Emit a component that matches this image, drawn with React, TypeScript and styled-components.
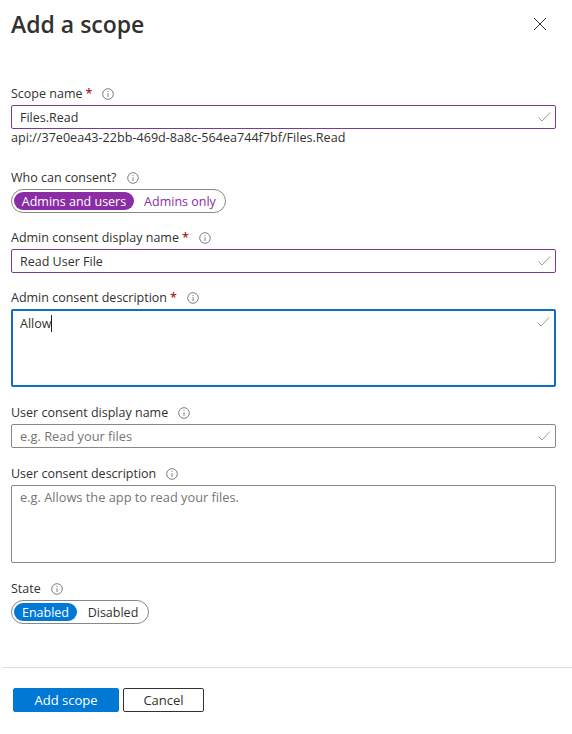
import React from "react";
import styled, { createGlobalStyle } from "styled-components";

const Global = createGlobalStyle`
  html, body { margin: 0; padding: 0; background: #fff; }
  body { font-family: "Open Sans", "Noto Sans", "Liberation Sans", sans-serif; color: #323130; }
  * { box-sizing: border-box; }
`;

const Page = styled.div`
  width: 572px;
  height: 734px;
  overflow: hidden;
  background: #fff;
  display: flex;
  flex-direction: column;
`;

const Header = styled.header`
  height: 48px;
  padding: 0 25px 0 11px;
  display: flex;
  align-items: center;
  justify-content: space-between;
`;

const Title = styled.h1`
  margin: 0;
  font-size: 23px;
  line-height: 30px;
  font-weight: 600;
  color: #323130;
`;

const CloseButton = styled.button`
  width: 14px;
  height: 14px;
  margin-bottom: 1px;
  padding: 0;
  border: 0;
  background: none;
  color: #323130;
  display: block;
`;

const Form = styled.form`
  padding: 37px 16px 0 11px;
  display: flex;
  flex-direction: column;
`;

const Field = styled.div<{ $gap?: number }>`
  margin-top: ${(p) => p.$gap ?? 0}px;
  display: flex;
  flex-direction: column;
`;

const Label = styled.div`
  height: 16px;
  margin-bottom: 4px;
  padding-top: 2px;
  display: flex;
  align-items: center;
  font-size: 12.5px;
  line-height: 16px;
  color: #323130;
`;

const Star = styled.span`
  color: #a4262c;
  margin-left: 3px;
  font-weight: 600;
`;

const InfoIcon = styled.svg`
  width: 12px;
  height: 12px;
  margin-left: 10px;
  color: #605e5c;
  flex: none;
`;

const InputBox = styled.div<{ $tone: "purple" | "grey" | "blue"; $height: number }>`
  position: relative;
  height: ${(p) => p.$height}px;
  border: ${(p) => (p.$tone === "blue" ? "2px solid #106ebe" : p.$tone === "purple" ? "1px solid #7b3a96" : "1px solid #8a8886")};
  border-radius: 2px;
  padding: ${(p) => (p.$height > 30 ? (p.$tone === "blue" ? "4px 7px" : "2px 8px") : "2px 8px 0")};
  display: flex;
  align-items: ${(p) => (p.$height > 30 ? "flex-start" : "center")};
  font-size: 12.5px;
  line-height: 18px;
  color: #323130;
`;

const Placeholder = styled.span`
  margin-bottom: 2px;
  color: #757575;
  font-size: 12.8px;
`;

const Caret = styled.span`
  display: inline-block;
  width: 1px;
  height: 17px;
  background: #201f1e;
  vertical-align: top;
`;

const Check = styled.svg`
  position: absolute;
  right: 4px;
  top: 4px;
  width: 14px;
  height: 14px;
  color: #7fb56f;
`;

const Hint = styled.div`
  margin-top: 1px;
  font-size: 12.6px;
  line-height: 16px;
  color: #323130;
`;

const Toggle = styled.div`
  align-self: flex-start;
  height: 24px;
  padding: 2px;
  border: 1px solid #8a8886;
  border-radius: 12px;
  display: flex;
  align-items: center;
  font-size: 12.5px;
`;

const Pill = styled.span<{ $bg: string; $width: number }>`
  width: ${(p) => p.$width}px;
  height: 18px;
  border-radius: 9px;
  background: ${(p) => p.$bg};
  color: #fff;
  display: flex;
  align-items: center;
  justify-content: center;
`;

const Option = styled.span<{ $color: string; $width: number }>`
  width: ${(p) => p.$width}px;
  padding-left: 3px;
  color: ${(p) => p.$color};
  text-align: center;
`;

const Divider = styled.hr`
  margin: 43px 0 0 2px;
  border: 0;
  border-top: 1px solid #e1e0df;
`;

const Footer = styled.footer`
  padding: 20px 13px;
  display: flex;
  gap: 4px;
`;

const Button = styled.button<{ $primary?: boolean }>`
  height: 24px;
  width: ${(p) => (p.$primary ? 106 : 81)}px;
  padding: 0;
  border-radius: 2px;
  border: 1px solid ${(p) => (p.$primary ? "#0078d4" : "#323130")};
  background: ${(p) => (p.$primary ? "#0078d4" : "#fff")};
  color: ${(p) => (p.$primary ? "#fff" : "#323130")};
  font: inherit;
  font-size: 13px;
`;

const Info = () => (
  <InfoIcon viewBox="0 0 12 12" fill="none" stroke="currentColor" strokeWidth="0.8">
    <circle cx="6" cy="6" r="5.3" />
    <path d="M6 5.2V9M6 3v1" />
  </InfoIcon>
);

const Tick = () => (
  <Check viewBox="0 0 14 14" fill="none" stroke="currentColor" strokeWidth="1">
    <path d="M1.5 7.5 5 11 13 2.5" />
  </Check>
);

export default function App() {
  return (
    <Page>
      <Global />
      <Header>
        <Title>Add a scope</Title>
        <CloseButton type="button" aria-label="Close">
          <svg viewBox="0 0 14 14" width="14" height="14" fill="none" stroke="currentColor" strokeWidth="1">
            <path d="M1 1l12 12M13 1 1 13" />
          </svg>
        </CloseButton>
      </Header>
      <Form>
        <Field>
          <Label>Scope name<Star>*</Star><Info /></Label>
          <InputBox $tone="purple" $height={24}>Files.Read<Tick /></InputBox>
          <Hint>api://37e0ea43-22bb-469d-8a8c-564ea744f7bf/Files.Read</Hint>
        </Field>
        <Field $gap={23}>
          <Label>Who can consent?<Info /></Label>
          <Toggle>
            <Pill $bg="#8a2da5" $width={120}>Admins and users</Pill>
            <Option $color="#8a2da5" $width={89}>Admins only</Option>
          </Toggle>
        </Field>
        <Field $gap={16}>
          <Label>Admin consent display name<Star>*</Star><Info /></Label>
          <InputBox $tone="purple" $height={24}>Read User File<Tick /></InputBox>
        </Field>
        <Field $gap={16}>
          <Label>Admin consent description<Star>*</Star><Info /></Label>
          <InputBox $tone="blue" $height={78}><span>Allow</span><Caret /><Tick /></InputBox>
        </Field>
        <Field $gap={17}>
          <Label>User consent display name<Info /></Label>
          <InputBox $tone="grey" $height={24}><Placeholder>e.g. Read your files</Placeholder><Tick /></InputBox>
        </Field>
        <Field $gap={17}>
          <Label>User consent description<Info /></Label>
          <InputBox $tone="grey" $height={78}><Placeholder>e.g. Allows the app to read your files.</Placeholder></InputBox>
        </Field>
        <Field $gap={17}>
          <Label>State<Info /></Label>
          <Toggle>
            <Pill $bg="#0078d4" $width={63}>Enabled</Pill>
            <Option $color="#323130" $width={69}>Disabled</Option>
          </Toggle>
        </Field>
      </Form>
      <Divider />
      <Footer>
        <Button type="button" $primary>Add scope</Button>
        <Button type="button">Cancel</Button>
      </Footer>
    </Page>
  );
}
